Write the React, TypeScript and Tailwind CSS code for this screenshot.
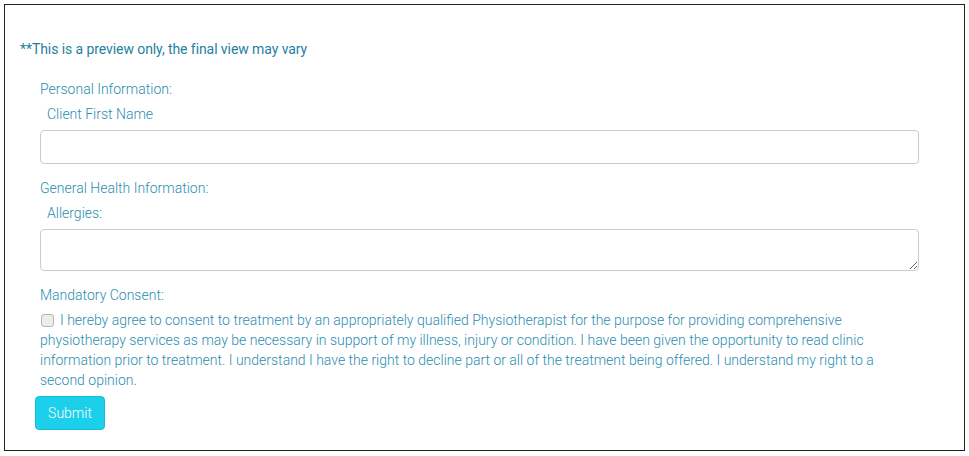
import React, { useState } from 'react';

const CONSENT_TEXT =
  'I hereby agree to consent to treatment by an appropriately qualified Physiotherapist for the purpose for providing comprehensive physiotherapy services as may be necessary in support of my illness, injury or condition. I have been given the opportunity to read clinic information prior to treatment. I understand I have the right to decline part or all of the treatment being offered. I understand my right to a second opinion.';

const App: React.FC = () => {
  const [firstName, setFirstName] = useState('');
  const [allergies, setAllergies] = useState('');
  const [agreed, setAgreed] = useState(false);

  return (
    <div className="h-[456px] w-[969px] bg-white pl-[4px] pt-[4px] font-['Roboto',sans-serif]">
      <div className="h-[447px] w-[961px] border border-[#222] bg-white pl-[15px] pt-[34px]">
        {/* Preview notice */}
        <p className="text-[14px] leading-[20px] tracking-[-0.08px] text-[#1f7fa3]">
          **This is a preview only, the final view may vary
        </p>

        <form className="ml-[20px] w-[878px] font-light text-[#2b8db0]" onSubmit={(e) => e.preventDefault()}>
          {/* Personal information */}
          <div className="mt-[20px] text-[14px] leading-[20px]">Personal Information:</div>
          <label htmlFor="firstName" className="mt-[5px] block pl-[7px] text-[14px] leading-[20px]">
            Client First Name
          </label>
          <input
            id="firstName"
            type="text"
            value={firstName}
            onChange={(e) => setFirstName(e.target.value)}
            className="mt-[6px] block h-[34px] w-[879px] rounded-[4px] border border-[#ccc] bg-white px-3 text-[14px] text-[#555] outline-none"
          />

          {/* General health */}
          <div className="mt-[14px] text-[14px] leading-[20px]">General Health Information:</div>
          <label htmlFor="allergies" className="mt-[5px] block pl-[7px] text-[14px] leading-[20px]">
            Allergies:
          </label>
          <textarea
            id="allergies"
            value={allergies}
            onChange={(e) => setAllergies(e.target.value)}
            className="mt-[6px] block h-[42px] w-[879px] rounded-[4px] border border-[#ccc] bg-white px-3 py-1 text-[14px] text-[#555] outline-none"
          />

          {/* Consent */}
          <div className="mt-[14px] text-[14px] leading-[20px]">Mandatory Consent:</div>
          <label className="mt-[5px] block text-[14px] leading-[20px]">
            <input
              type="checkbox"
              checked={agreed}
              onChange={(e) => setAgreed(e.target.checked)}
              className="relative top-[1px] ml-[1px] mr-[6px] inline-block h-[13px] w-[13px] appearance-none rounded-[3px] border border-[#b5b5b5] bg-[#ececec] align-[-1px]"
            />
            {CONSENT_TEXT}
          </label>

          <button
            type="submit"
            className="-ml-[5px] mt-[6px] block h-[34px] w-[70px] rounded-[4px] border border-[#15bedb] bg-[#1ccfea] text-[14px] font-light text-white"
          >
            Submit
          </button>
        </form>
      </div>
    </div>
  );
};

export default App;
